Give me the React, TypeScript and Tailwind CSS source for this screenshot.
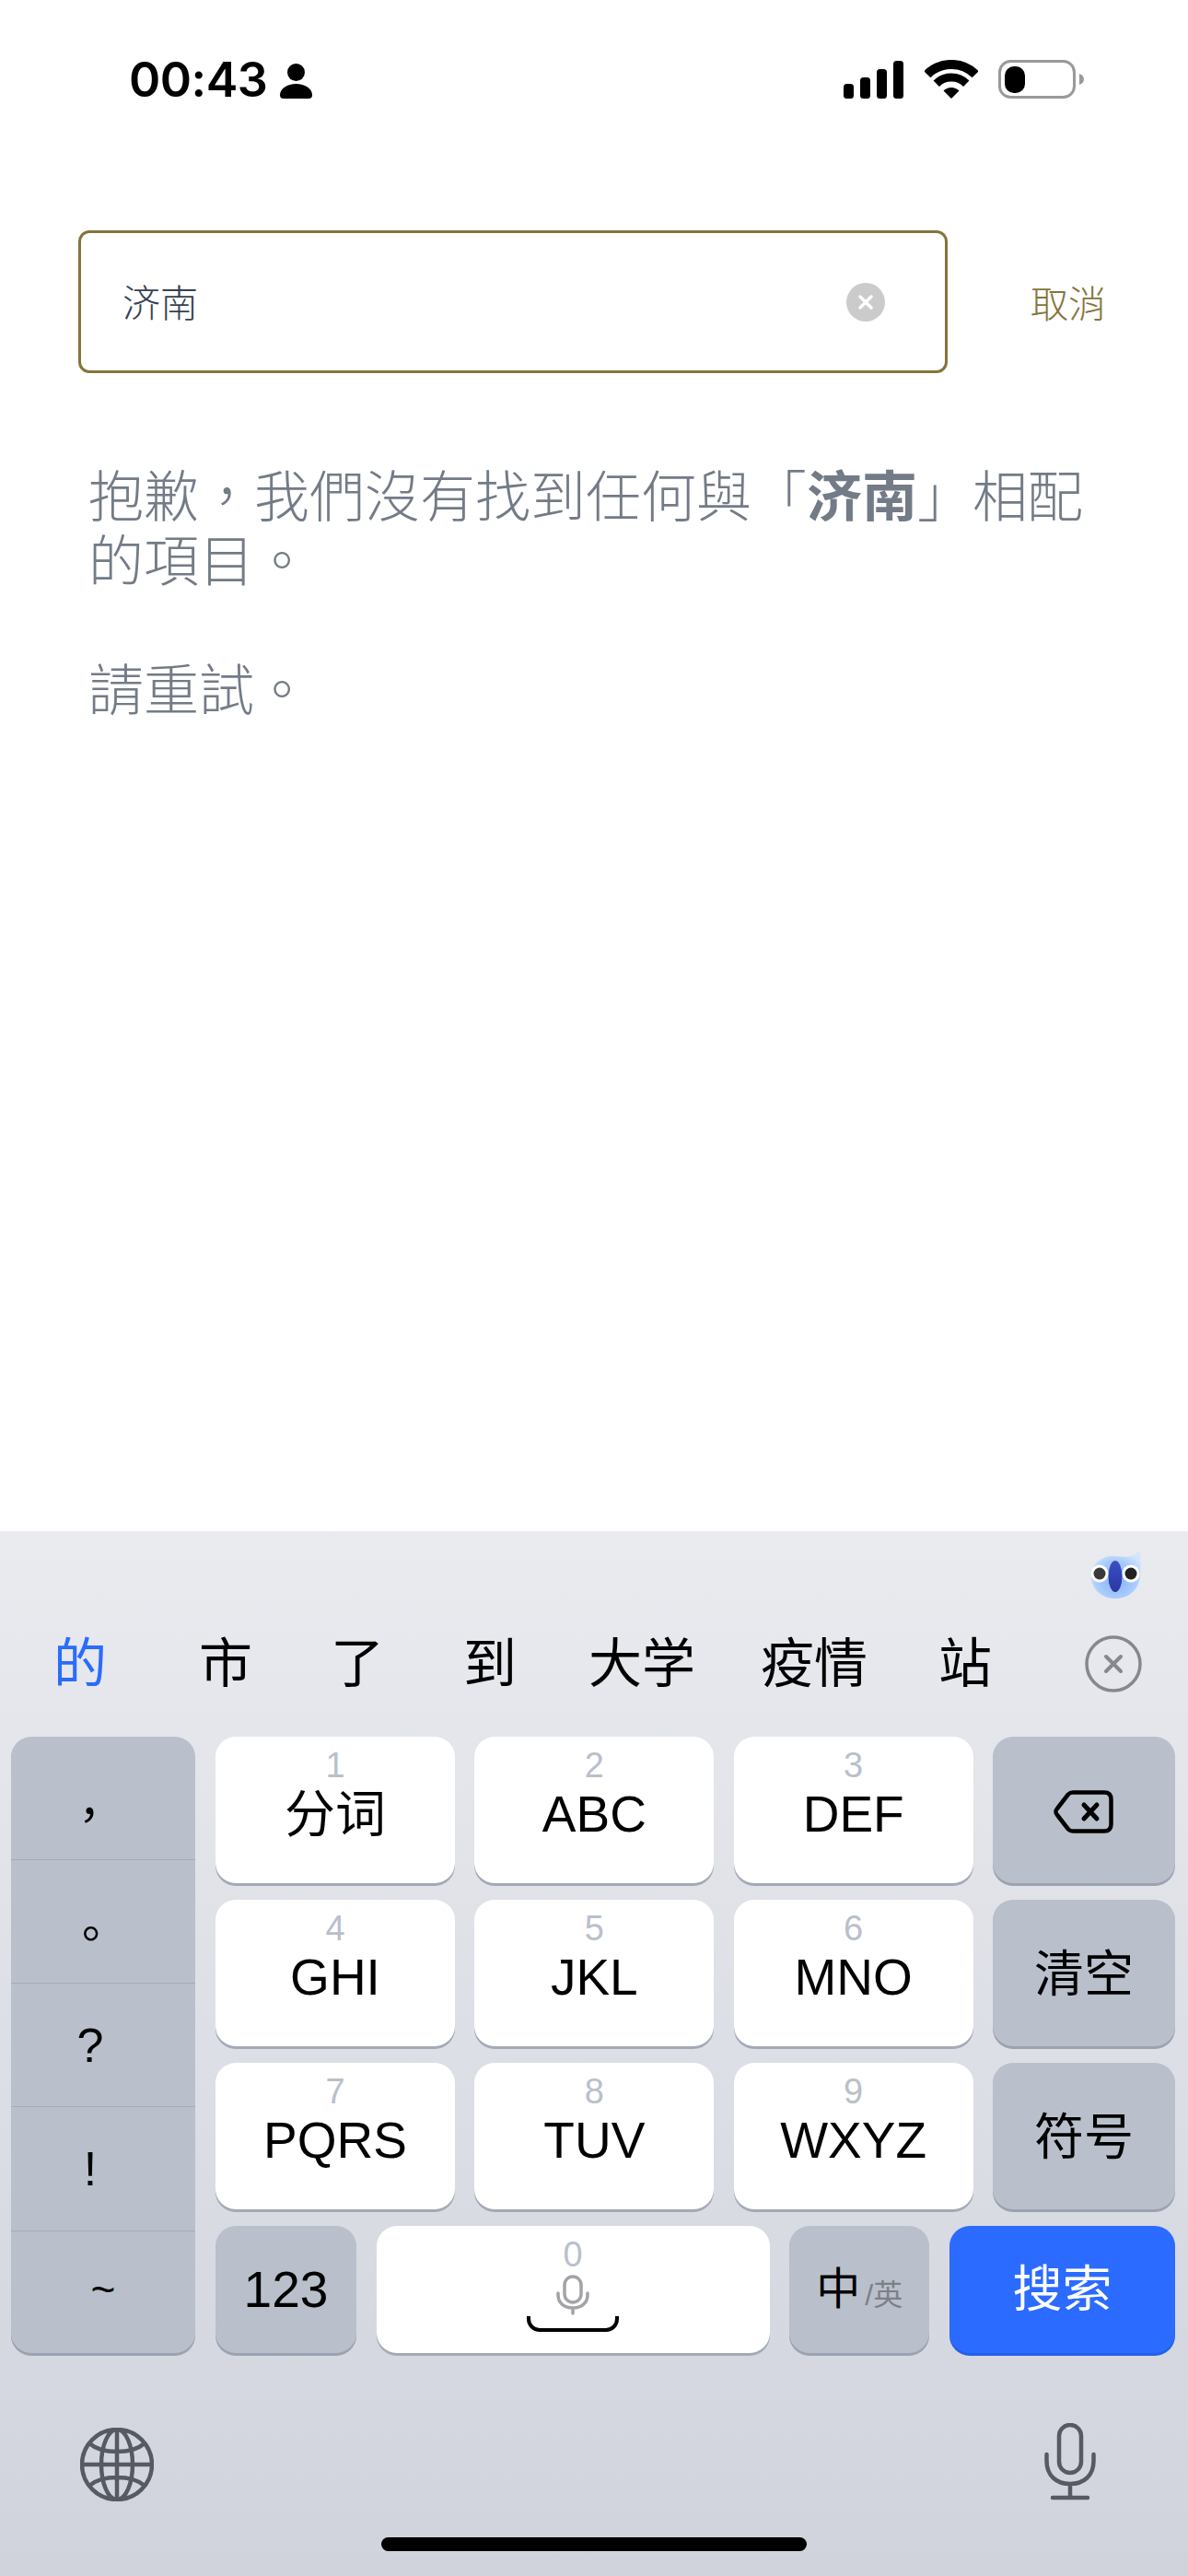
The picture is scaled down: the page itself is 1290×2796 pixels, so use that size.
const cjk = "font-['Liberation_Sans','Noto_Sans_CJK_SC',sans-serif]";

const candidates = [
  { label: "的", className: "ml-[58px] text-[#2b6bff]" },
  { label: "市", className: "ml-[100px] text-black" },
  { label: "了", className: "ml-[85px] text-black" },
  { label: "到", className: "ml-[86px] text-black" },
  { label: "大学", className: "ml-[78px] text-black" },
  { label: "疫情", className: "ml-[71px] text-black" },
  { label: "站", className: "ml-[77px] text-black" },
];

const punctuation = [
  { label: "，", className: "text-[50px] h-[134px] pt-[8px] pr-[4px]" },
  { label: "。", className: "text-[50px] h-[134px] pl-[4px]" },
  { label: "?", className: "text-[52px] h-[134px] pr-[28px]" },
  { label: "!", className: "text-[52px] h-[135px] pr-[28px]" },
  { label: "~", className: "text-[46px] h-[132px] pb-[6px]" },
];

const rows = [
  { keys: [["1", "分词"], ["2", "ABC"], ["3", "DEF"]], side: "back" },
  { keys: [["4", "GHI"], ["5", "JKL"], ["6", "MNO"]], side: "清空" },
  { keys: [["7", "PQRS"], ["8", "TUV"], ["9", "WXYZ"]], side: "符号" },
];

function PersonIcon() {
  return (
    <svg width="35" height="38" viewBox="0 0 35 38" fill="black">
      <circle cx="17.5" cy="9.5" r="9.5" />
      <path d="M0 34C0 27 8 22 17.5 22S35 27 35 34C35 37 33.500 38 31 38H4C1.500 38 0 37 0 34Z" />
    </svg>
  );
}

function SignalIcon() {
  return (
    <svg width="65" height="41" viewBox="0 0 65 41" fill="black">
      <rect x="0" y="25" width="11" height="16" rx="3.5" />
      <rect x="18" y="18" width="11" height="23" rx="3.5" />
      <rect x="36" y="9" width="11" height="32" rx="3.5" />
      <rect x="54" y="0" width="11" height="41" rx="3.5" />
    </svg>
  );
}

function WifiIcon() {
  return (
    <svg width="58" height="42" viewBox="0 0 58 42" fill="none" stroke="black">
      <path d="M2.800 15.800A37 37 0 0 1 55.200 15.800" strokeWidth="10" />
      <path d="M12.740 25.740A23 23 0 0 1 45.260 25.740" strokeWidth="9" />
      <path d="M29 42L20.500 33.500A12 12 0 0 1 37.500 33.500Z" fill="black" stroke="none" />
    </svg>
  );
}

function BatteryIcon() {
  return (
    <svg width="93" height="42" viewBox="0 0 93 42">
      <rect x="1.500" y="1.500" width="81" height="39" rx="12" fill="none" stroke="#999999" strokeWidth="3" />
      <rect x="7" y="7" width="22" height="29" rx="10" fill="black" />
      <path d="M88 15C91 16 93 18 93 21S91 26 88 27Z" fill="#999999" />
    </svg>
  );
}

function Mascot() {
  return (
    <svg width="56" height="54" viewBox="0 0 56 54">
      <defs>
        <radialGradient id="face" cx="50%" cy="60%" r="60%">
          <stop offset="0%" stopColor="#86aef8" />
          <stop offset="65%" stopColor="#a8ccfc" />
          <stop offset="100%" stopColor="#d3e4fc" />
        </radialGradient>
        <linearGradient id="beak" x1="0" y1="0" x2="0" y2="1">
          <stop offset="0%" stopColor="#3a50c4" />
          <stop offset="100%" stopColor="#2a37a0" />
        </linearGradient>
      </defs>
      <path d="M1 28C1 14 12 6 25 6C33 6 39 8 44 6C49 4 52 2 53 0C55 4 55 14 54 26C54 42 42 52 27 52C12 52 1 42 1 28Z" fill="url(#face)" />
      <circle cx="10" cy="25" r="9.500" fill="white" />
      <circle cx="44" cy="25" r="9.500" fill="white" />
      <circle cx="10" cy="25" r="6.500" fill="#3a3a3a" />
      <circle cx="44" cy="25" r="6.500" fill="#222222" />
      <ellipse cx="27" cy="28" rx="7.500" ry="17" fill="url(#beak)" />
    </svg>
  );
}

function DismissIcon() {
  return (
    <svg width="62" height="62" viewBox="0 0 62 62" fill="none" stroke="#85888f" strokeLinecap="round">
      <circle cx="31" cy="31" r="29" strokeWidth="3.500" />
      <path d="M23 23L39 39M39 23L23 39" strokeWidth="4" />
    </svg>
  );
}

function BackspaceIcon() {
  return (
    <svg width="65" height="47" viewBox="0 0 65 47" fill="none" stroke="black" strokeLinecap="round" strokeLinejoin="round">
      <path d="M21 2.500H55C60 2.500 62.500 5 62.500 10V37C62.500 42 60 44.500 55 44.500H21C19 44.500 17.500 44 16 42.500L4 27C2 25 2 22 4 20L16 4.500C17.500 3 19 2.500 21 2.500Z" strokeWidth="4.500" />
      <path d="M33 16L47 31M47 16L33 31" strokeWidth="5" />
    </svg>
  );
}

function SpaceMic() {
  return (
    <svg width="36" height="44" viewBox="0 0 36 44" fill="none" stroke="#a3a3a8" strokeLinecap="round">
      <rect x="9" y="2" width="18" height="28" rx="9" strokeWidth="3.500" />
      <path d="M2 20V22C2 31 9 36 18 36S34 31 34 22V20M18 36V42" strokeWidth="3.500" />
    </svg>
  );
}

function GlobeIcon() {
  return (
    <svg width="80" height="80" viewBox="0 0 80 80" fill="none" stroke="#555a63" strokeWidth="4.500">
      <circle cx="40" cy="40" r="38" />
      <ellipse cx="40" cy="40" rx="17" ry="38" />
      <path d="M40 2V78M2 40H78M10 17C18 24 28 26 40 26S62 24 70 17M10 63C18 56 28 54 40 54S62 56 70 63" />
    </svg>
  );
}

function MicIcon() {
  return (
    <svg width="56" height="84" viewBox="0 0 56 84" fill="none" stroke="#555a63" strokeLinecap="round">
      <rect x="16" y="2" width="24" height="52" rx="12" strokeWidth="4.500" />
      <path d="M2.500 34V41C2.500 57 13 66 28 66S53.500 57 53.500 41V34M28 66V81M9 81H47" strokeWidth="4.500" />
    </svg>
  );
}

function DigitKey({ num, label }: { num: string; label: string }) {
  return (
    <div className="w-[260px] h-full bg-white rounded-[22px] shadow-[0_3px_0_#a3a9b6] flex flex-col items-center pt-[12px]">
      <div className="text-[38px] leading-[38px] text-[#b9c0cc]">{num}</div>
      <div className="mt-[6px] text-[55px] leading-[56px] text-black">{label}</div>
    </div>
  );
}

export default function App() {
  return (
    <div className={`w-[1290px] h-[2796px] bg-white flex flex-col overflow-hidden ${cjk}`}>
      {/* status bar */}
      <div className="h-[107px] pt-[65px] pl-[140px] pr-[113px] flex justify-between items-end shrink-0">
        <div className="flex items-end gap-[14px] font-['Inter',sans-serif]">
          <span className="text-[52px] leading-[40px] font-semibold text-black tracking-[-0.5px]">00:43</span>
          <PersonIcon />
        </div>
        <div className="flex items-end">
          <SignalIcon />
          <div className="ml-[23px]">
            <WifiIcon />
          </div>
          <div className="ml-[22px]">
            <BatteryIcon />
          </div>
        </div>
      </div>

      {/* search */}
      <div className="flex-1 font-light font-['Noto_Sans_CJK_TC',sans-serif]">
        <div className="mt-[143px] pl-[85px] flex items-center">
          <div className="w-[944px] h-[155px] border-[3px] border-[#85743a] rounded-[12px] flex items-center justify-between pl-[45px] pr-[65px]">
            <span className="-mt-[2px] text-[41px] text-[#374151] font-['Noto_Sans_CJK_SC',sans-serif]">济南</span>
            <div className="w-[42px] h-[42px] rounded-full bg-[#cbcbcb] flex items-center justify-center">
              <svg width="16" height="16" viewBox="0 0 16 16" fill="none" stroke="white" strokeWidth="3.500" strokeLinecap="round">
                <path d="M2 2L14 14M14 2L2 14" />
              </svg>
            </div>
          </div>
          <span className="ml-[90px] text-[41px] text-[#85743a]">取消</span>
        </div>
        <div className="mt-[95px] ml-[96px] w-[1092px] text-[60px] leading-[70px] text-[#737b87]">
          <p>
            抱歉，我們沒有找到任何與「<b className="font-bold">济南</b>」相配的項目。
          </p>
          <p className="mt-[70px]">請重試。</p>
        </div>
      </div>

      {/* keyboard */}
      <div className="h-[1134px] shrink-0 bg-gradient-to-b from-[#e9ebef] to-[#d0d3dc] flex flex-col">
        <div className="h-[108px] pt-[21px] pr-[50px] flex justify-end shrink-0">
          <Mascot />
        </div>
        <div className="h-[70px] pt-[2px] flex items-center shrink-0">
          {candidates.map((c) => (
            <span key={c.label} className={`text-[58px] leading-[70px] ${c.className}`}>
              {c.label}
            </span>
          ))}
          <div className="ml-[101px]">
            <DismissIcon />
          </div>
        </div>

        <div className="mt-[45px] pl-[12px] pr-[14px] flex justify-between h-[669px] shrink-0">
          <div className="w-[200px] h-full bg-[#b9c0cb] rounded-[22px] shadow-[0_3px_0_#9ca2b0] flex flex-col divide-y divide-[#a5acb9]">
            {punctuation.map((p) => (
              <div key={p.label} className={`flex items-center justify-center text-black leading-none ${p.className}`}>
                {p.label}
              </div>
            ))}
          </div>

          <div className="w-[1042px] flex flex-col justify-between">
            {rows.map((r) => (
              <div key={r.keys[0][0]} className="h-[159px] flex justify-between">
                {r.keys.map(([num, label]) => (
                  <DigitKey key={num} num={num} label={label} />
                ))}
                <div className="w-[198px] h-full bg-[#b9c0cb] rounded-[22px] shadow-[0_3px_0_#9ca2b0] flex items-center justify-center text-[54px] text-black pt-[3px]">
                  {r.side === "back" ? <BackspaceIcon /> : r.side}
                </div>
              </div>
            ))}
            <div className="h-[138px] flex justify-between">
              <div className="w-[153px] bg-[#b9c0cb] rounded-[22px] shadow-[0_3px_0_#9ca2b0] flex items-center justify-center text-[55px] text-black">
                123
              </div>
              <div className="w-[427px] bg-white rounded-[22px] shadow-[0_3px_0_#a3a9b6] flex flex-col items-center pt-[12px]">
                <div className="text-[38px] leading-[38px] text-[#b9c0cc]">0</div>
                <div className="mt-[3px] h-[44px]">
                  <SpaceMic />
                </div>
                <div className="mt-[1px] w-[100px] h-[17px] border-[4px] border-t-0 border-black rounded-b-[14px]" />
              </div>
              <div className="w-[152px] bg-[#b9c0cb] rounded-[22px] shadow-[0_3px_0_#9ca2b0] flex items-center justify-center text-black">
                <span className="text-[48px] leading-none mr-[5px]">中</span>
                <span className="text-[32px] leading-none text-[#7d8088] mt-[12px]">/英</span>
              </div>
              <div className="w-[245px] bg-[#2b6bff] rounded-[22px] shadow-[0_3px_0_#2560e8] flex items-center justify-center text-[54px] text-white">
                搜索
              </div>
            </div>
          </div>
        </div>

        <div className="mt-[81px] pl-[87px] pr-[100px] flex justify-between items-start shrink-0">
          <GlobeIcon />
          <div className="-mt-[5px]">
            <MicIcon />
          </div>
        </div>
        <div className="mt-[39px] mx-auto w-[462px] h-[15px] rounded-full bg-black shrink-0" />
      </div>
    </div>
  );
}
